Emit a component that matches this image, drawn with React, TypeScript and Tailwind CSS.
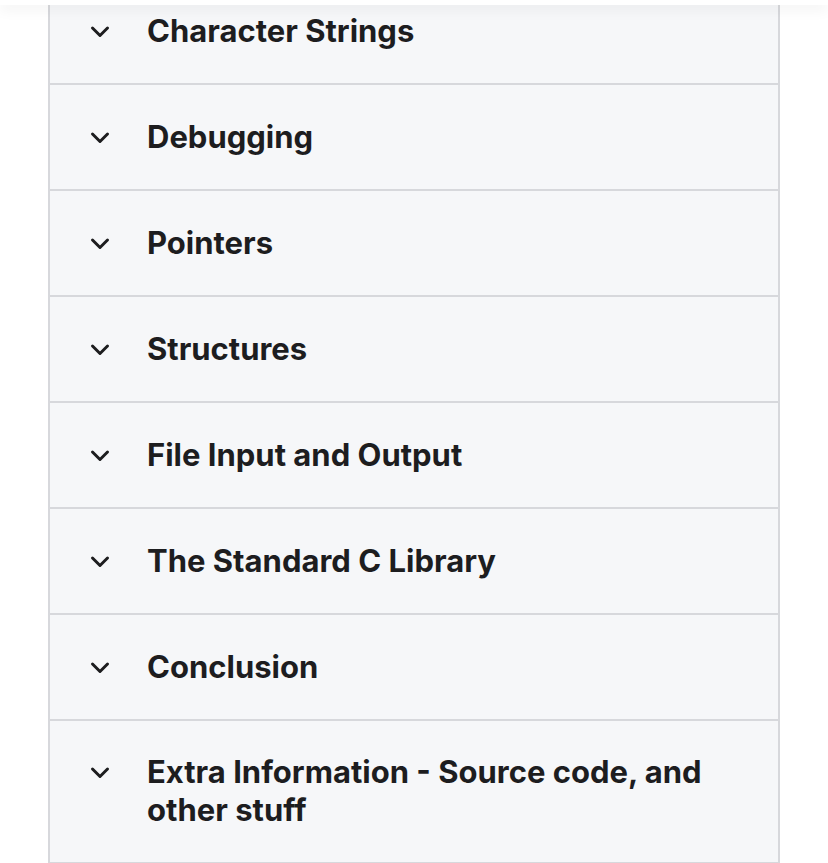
import React from "react";

const items = [
  "Character Strings",
  "Debugging",
  "Pointers",
  "Structures",
  "File Input and Output",
  "The Standard C Library",
  "Conclusion",
  "Extra Information - Source code, and other stuff",
];

function Chevron() {
  return (
    <svg width="20" height="14" viewBox="0 0 20 14" className="shrink-0">
      <path d="M2.5 3 L10 10.5 L17.5 3" fill="none" stroke="#1d1d1f" strokeWidth="3" strokeLinecap="round" strokeLinejoin="round" />
    </svg>
  );
}

export default function App() {
  return (
    <div className="relative min-h-[863px] bg-white overflow-hidden" style={{ fontFamily: "Inter, 'Noto Sans', sans-serif" }}>
      <div className="absolute left-0 right-0 top-0 z-10 h-[5px] bg-white shadow-[0_3px_14px_rgba(0,0,0,0.10)]" />
      <div className="ml-[48px] mt-[-21px] w-[732px] border-x-2 border-[#d7d8dc] bg-[#f6f7f9]">
        {items.map((t, i) => {
          const last = i === items.length - 1;
          return (
            <div
              key={t}
              className={
                "flex border-b-2 border-[#d7d8dc] pl-[40px] pr-[60px] " +
                (last ? "items-start pt-[32px] pb-[33px]" : "items-center h-[106px]")
              }
            >
              <div className="w-[57px] h-[38px] shrink-0 flex items-center pt-[2px]">
                <Chevron />
              </div>
              <div className="text-[31px] leading-[38px] font-bold tracking-[0px] text-[#1d1d1f]">{t}</div>
            </div>
          );
        })}
      </div>
    </div>
  );
}
